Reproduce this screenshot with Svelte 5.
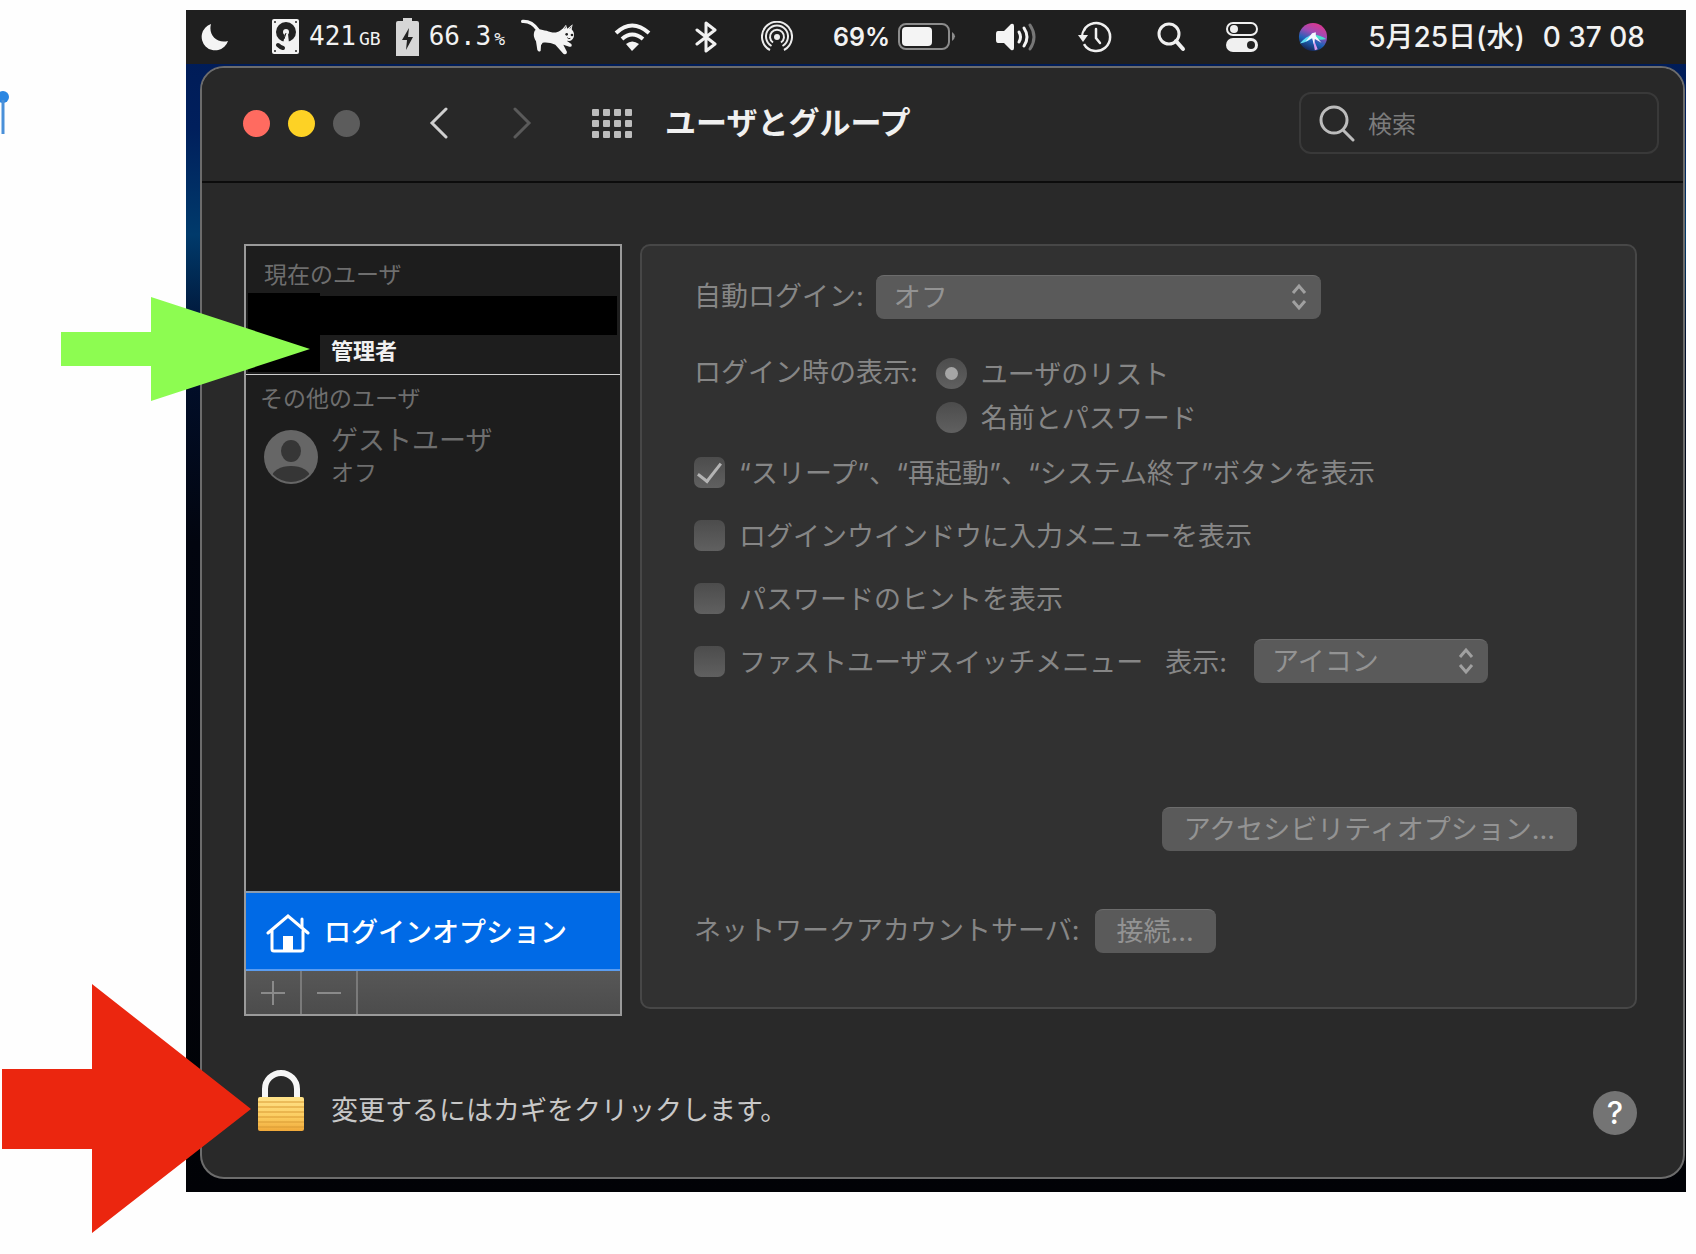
<script>
  let search = '';
  let autoLogin = 'off';
  let loginDisplay = 'list';
  let menuStyle = 'icon';

  let options = [
    { id: 'power', label: '“スリープ”、“再起動”、“システム終了”ボタンを表示', checked: true },
    { id: 'input', label: 'ログインウインドウに入力メニューを表示', checked: false },
    { id: 'hint', label: 'パスワードのヒントを表示', checked: false },
    { id: 'fast', label: 'ファストユーザスイッチメニュー', checked: false }
  ];

  const dots = [0, 1, 2, 3].flatMap((col) => [0, 1, 2].map((row) => ({ col, row })));
</script>

<div class="page">
  <div class="desktop">
    <header class="menubar">
      <svg viewBox="0 0 32 32" width="32" height="32">
        <path d="M11 3A13.500 13.500 0 1 0 28 20C17 23 8 14 11 3Z" fill="#f4f4f4" />
      </svg>

      <div class="stats">
        <div class="stat">
          <svg viewBox="0 0 28 36" width="28" height="36">
            <rect x="0" y="0" width="27" height="35" rx="2" fill="#f2f2f2" />
            <circle cx="14" cy="13" r="10" fill="#222" />
            <path d="M13 15L11 25L17 24L16 15Z" fill="#f2f2f2" />
            <circle cx="14" cy="13" r="3" fill="#f2f2f2" />
            <path d="M14 14L12 20" stroke="#222" stroke-width="1" />
            <path d="M6 26Q8 28 11 29" stroke="#222" stroke-width="4" stroke-linecap="round" fill="none" />
            <circle cx="3" cy="3" r="1" fill="#222" />
            <circle cx="24" cy="3" r="1" fill="#222" />
            <circle cx="3" cy="32" r="1" fill="#222" />
            <circle cx="24" cy="32" r="1" fill="#222" />
          </svg>
          <span class="mono">421<small>GB</small></span>
        </div>
        <div class="stat">
          <svg viewBox="0 0 24 38" width="24" height="38">
            <path d="M7 0H16V3H21Q23 3 23 5V38H0V5Q0 3 2 3H7Z" fill="#d6d6d6" />
            <path d="M13 10L6 22H11L10 32L17 19H12Z" fill="#222" />
          </svg>
          <span class="mono">66.3<small>%</small></span>
        </div>
        <svg viewBox="36 28 162 114" width="54" height="38">
          <path d="M44 38C64 37 78 46 90 64" stroke="#f4f4f4" stroke-width="10" stroke-linecap="round" fill="none" />
          <path d="M80 66C92 56 104 66 116 66C130 72 146 74 156 66L164 60L174 48L178 60L194 47L191 62C204 76 198 94 184 97L176 96L190 106Q194 116 184 114L166 108L177 130Q176 140 166 135L142 108C128 102 116 100 104 102L99 110L98 126Q93 132 88 124L84 98C76 84 76 76 80 66Z" fill="#f4f4f4" />
          <path d="M170 60L174 53M185 60L190 54" stroke="#222" stroke-width="2" />
          <circle cx="176" cy="77" r="4" fill="#222" />
          <circle cx="192" cy="79" r="4" fill="#222" />
          <path d="M178 87Q182 92 187 89" stroke="#222" stroke-width="3" fill="none" />
        </svg>
      </div>

      <svg viewBox="0 0 37 30" width="37" height="30">
        <g fill="none" stroke="#f4f4f4" stroke-width="4">
          <path d="M2 11Q18 -4 35 11" />
          <path d="M8 17Q18 8 29 17" />
        </g>
        <path d="M12 22Q18 17 25 22L18 29Z" fill="#f4f4f4" />
      </svg>

      <svg viewBox="1 0 30 32" width="30" height="32">
        <path d="M7 9L25 23L16 30V2L25 9L7 23" fill="none" stroke="#f0f0f0" stroke-width="3" stroke-linejoin="round" stroke-linecap="round" />
      </svg>

      <svg viewBox="0 0 32 32" width="32" height="32">
        <g fill="none" stroke="#ececec" stroke-width="2">
          <path d="M9 29A15 15 0 1 1 23 29" />
          <path d="M10.500 25A11 11 0 1 1 21.500 25" />
          <path d="M12 21.500A7 7 0 1 1 20 21.500" />
        </g>
        <path d="M16 17L10 31H22Z" fill="#1f1f1f" />
        <circle cx="16" cy="16" r="3" fill="#ececec" />
      </svg>

      <div class="battery">
        <span>69%</span>
        <svg viewBox="0 0 58 28" width="58" height="28">
          <rect x="1" y="1" width="50" height="25" rx="7" fill="none" stroke="#8c8c8c" stroke-width="2" />
          <rect x="4" y="4" width="30" height="19" rx="4" fill="#f4f4f4" />
          <path d="M54 9Q60 13 54 18Z" fill="#8c8c8c" />
        </svg>
      </div>

      <svg viewBox="0 0 40 30" width="40" height="30">
        <path d="M2 9H8L15 2Q18 1 18 4V26Q18 29 15 28L8 21H2Q0 21 0 18V12Q0 9 2 9Z" fill="#f4f4f4" />
        <g fill="none" stroke-width="3" stroke-linecap="round">
          <path d="M23 10Q26 15 23 20" stroke="#f4f4f4" />
          <path d="M28 6Q34 15 28 24" stroke="#f4f4f4" />
          <path d="M34 3Q42 15 34 27" stroke="#777" />
        </g>
      </svg>

      <svg viewBox="0 0 38 32" width="38" height="32">
        <path d="M8 9A14 14 0 1 1 8 23" fill="none" stroke="#f0f0f0" stroke-width="2.500" />
        <path d="M6 15V16Q6 11 9 8" fill="none" stroke="#f0f0f0" stroke-width="2" />
        <path d="M2 14H12L7 21Z" fill="#f0f0f0" />
        <path d="M20 8V17L24 22" fill="none" stroke="#f0f0f0" stroke-width="2.500" stroke-linecap="round" />
      </svg>

      <svg viewBox="0 0 32 32" width="32" height="32">
        <circle cx="15" cy="13" r="10" fill="none" stroke="#f0f0f0" stroke-width="3" />
        <path d="M22 20L29 28" stroke="#f0f0f0" stroke-width="4" stroke-linecap="round" />
      </svg>

      <svg viewBox="0 0 32 32" width="32" height="32">
        <rect x="1" y="2" width="30" height="12" rx="6" fill="none" stroke="#f0f0f0" stroke-width="2" />
        <circle cx="8" cy="8" r="4" fill="#f0f0f0" />
        <rect x="0" y="17" width="32" height="14" rx="7" fill="#f0f0f0" />
        <circle cx="25" cy="24" r="4" fill="#222" />
      </svg>

      <svg viewBox="0 0 32 32" width="30" height="30">
        <defs>
          <linearGradient id="siri" x1="0.700" y1="0" x2="0.300" y2="1">
            <stop offset="0" stop-color="#e0358c" />
            <stop offset="0.350" stop-color="#a04bb4" />
            <stop offset="0.650" stop-color="#1d62b8" />
            <stop offset="1" stop-color="#15204a" />
          </linearGradient>
        </defs>
        <circle cx="16" cy="16" r="15" fill="url(#siri)" />
        <path d="M17 13Q8 15 2 23Q11 21 17 16Z" fill="#5fdcf4" />
        <path d="M16 13Q24 14 30 18Q23 20 16 17Z" fill="#49e0cf" />
        <path d="M15 14L18 30L21 29Z" fill="#d79af0" />
        <path d="M15 12L19 11L19 15L25 22L18 18L17 24L15 17L8 21Z" fill="#f6f8ff" />
      </svg>

      <time class="clock" datetime="2022-05-25T00:37:08">
        <span>5月25日(水)</span>
        <span>0 37 08</span>
      </time>
    </header>

    <main class="window">
      <div class="titlebar">
        <div class="lights">
          <button class="light close" aria-label="閉じる"></button>
          <button class="light minimize" aria-label="しまう"></button>
          <button class="light zoom" aria-label="拡大" disabled></button>
        </div>
        <div class="nav">
          <button class="icon-btn" aria-label="戻る">
            <svg viewBox="0 0 20 32" width="20" height="32">
              <path d="M17 2L3 16L17 30" fill="none" stroke="#cfcfcf" stroke-width="3" stroke-linecap="round" />
            </svg>
          </button>
          <button class="icon-btn" aria-label="進む" disabled>
            <svg viewBox="0 0 20 32" width="20" height="32">
              <path d="M3 2L17 16L3 30" fill="none" stroke="#5a5a5a" stroke-width="3" stroke-linecap="round" />
            </svg>
          </button>
        </div>
        <button class="icon-btn" aria-label="すべてを表示">
          <svg viewBox="0 0 40 29" width="40" height="29">
            {#each dots as dot}
              <rect x={dot.col * 11} y={dot.row * 11} width="7" height="7" rx="1" fill="#bdbdbd" />
            {/each}
          </svg>
        </button>
        <h1>ユーザとグループ</h1>
        <label class="search">
          <svg viewBox="0 0 36 38" width="36" height="38">
            <circle cx="15" cy="16" r="13" fill="none" stroke="#bcbcbc" stroke-width="3" />
            <path d="M24 26L34 36" stroke="#bcbcbc" stroke-width="3" stroke-linecap="round" />
          </svg>
          <input type="search" placeholder="検索" aria-label="検索" bind:value={search} />
        </label>
      </div>

      <div class="content">
        <aside class="users">
          <section class="current">
            <h2>現在のユーザ</h2>
            <div class="user-row">
              <div class="masked-avatar"></div>
              <div class="masked-info">
                <div class="masked-name"></div>
                <p>管理者</p>
              </div>
            </div>
          </section>

          <section class="others">
            <h2>その他のユーザ</h2>
            <div class="guest">
              <svg viewBox="0 0 54 54" width="54" height="54">
                <defs>
                  <clipPath id="avatar"><circle cx="27" cy="27" r="25" /></clipPath>
                </defs>
                <circle cx="27" cy="27" r="27" fill="#666" />
                <ellipse cx="27" cy="21" rx="10" ry="11" fill="#363636" />
                <ellipse cx="27" cy="47" rx="19" ry="11" fill="#363636" clip-path="url(#avatar)" />
              </svg>
              <div>
                <p class="guest-name">ゲストユーザ</p>
                <p class="guest-state">オフ</p>
              </div>
            </div>
          </section>

          <button class="login-options">
            <svg viewBox="0 0 44 40" width="44" height="40">
              <path d="M2 20L22 3L42 20" fill="none" stroke="#fff" stroke-width="3" stroke-linecap="round" />
              <path d="M6 18V36Q6 38 8 38H35Q37 38 37 36V18M36 14V6" fill="none" stroke="#fff" stroke-width="3" stroke-linecap="round" />
              <rect x="17" y="23" width="10" height="15" fill="#fff" />
            </svg>
            ログインオプション
          </button>

          <div class="list-tools">
            <button aria-label="追加" disabled>
              <svg viewBox="0 0 24 24" width="24" height="24">
                <path d="M12 0V24M0 12H24" stroke="#8a8a8a" stroke-width="2" />
              </svg>
            </button>
            <button aria-label="削除" disabled>
              <svg viewBox="0 0 24 24" width="24" height="24">
                <path d="M0 12H24" stroke="#8a8a8a" stroke-width="2" />
              </svg>
            </button>
          </div>
        </aside>

        <section class="panel">
          <div class="row">
            <label for="auto-login">自動ログイン:</label>
            <div class="select wide">
              <select id="auto-login" bind:value={autoLogin} disabled>
                <option value="off">オフ</option>
              </select>
              <svg viewBox="0 0 18 28" width="18" height="28">
                <path d="M3 10L9 3L15 10M3 18L9 25L15 18" fill="none" stroke="#a0a0a0" stroke-width="3" />
              </svg>
            </div>
          </div>

          <div class="radios" role="radiogroup" aria-labelledby="display-label">
            <span id="display-label">ログイン時の表示:</span>
            <div>
              <label class="row">
                <input type="radio" name="display" value="list" bind:group={loginDisplay} disabled />
                <span class="caption">ユーザのリスト</span>
              </label>
              <label class="row">
                <input type="radio" name="display" value="name" bind:group={loginDisplay} disabled />
                <span class="caption">名前とパスワード</span>
              </label>
            </div>
          </div>

          <div class="checks">
            {#each options as option}
              <div class="row">
                <label class="check">
                  <input type="checkbox" bind:checked={option.checked} disabled />
                  <span class="caption">{option.label}</span>
                </label>
                {#if option.id === 'fast'}
                  <label class="menu-label caption" for="menu-style">表示:</label>
                  <div class="select">
                    <select id="menu-style" bind:value={menuStyle} disabled>
                      <option value="icon">アイコン</option>
                    </select>
                    <svg viewBox="0 0 18 28" width="18" height="28">
                      <path d="M3 10L9 3L15 10M3 18L9 25L15 18" fill="none" stroke="#a0a0a0" stroke-width="3" />
                    </svg>
                  </div>
                {/if}
              </div>
            {/each}
          </div>

          <div class="row accessibility">
            <button class="push" disabled>アクセシビリティオプション...</button>
          </div>

          <div class="row network">
            <span>ネットワークアカウントサーバ:</span>
            <button class="push" disabled>接続...</button>
          </div>
        </section>
      </div>

      <footer>
        <button class="icon-btn lock" aria-label="カギ">
          <svg viewBox="0 0 48 62" width="48" height="62">
            <defs>
              <linearGradient id="brass" x1="0" y1="0" x2="0" y2="1">
                <stop offset="0" stop-color="#ffe38a" />
                <stop offset="0.600" stop-color="#fbcb5e" />
                <stop offset="1" stop-color="#f0a93a" />
              </linearGradient>
            </defs>
            <path d="M8 30V19A16 16 0 0 1 40 19V30" fill="none" stroke="#f6f6f6" stroke-width="6" />
            <rect x="1" y="27" width="46" height="34" rx="2" fill="url(#brass)" />
            <path d="M1 32H47M1 37H47M1 42H47M1 47H47M1 52H47M1 57H47" stroke="#d99a35" stroke-width="1" />
          </svg>
        </button>
        <p>変更するにはカギをクリックします。</p>
        <button class="help" aria-label="ヘルプ">?</button>
      </footer>
    </main>
  </div>

  <svg class="notes" viewBox="0 0 320 1254" width="320" height="1254" aria-hidden="true">
    <circle cx="3" cy="97" r="6" fill="#2a86e2" />
    <path d="M3 100V134" stroke="#4a90d9" stroke-width="3" />
    <path d="M61 332H151V297L310 349L151 401V366H61Z" fill="#8dfc51" />
    <path d="M2 1069H92V984L251 1109L92 1233V1149H2Z" fill="#eb260f" />
  </svg>
</div>

<style>
  :global(body) {
    margin: 0;
    background: #fefefe;
  }

  .page {
    position: relative;
    padding: 10px 10px 62px 186px;
    font-family: Inter, "Noto Sans CJK JP", sans-serif;
    font-size: 27px;
    line-height: 32px;
    color: #868686;
  }

  .page * { box-sizing: border-box; }

  h1, h2, p { margin: 0; }

  button, input, select {
    font: inherit;
    color: inherit;
    margin: 0;
  }

  svg {
    display: block;
    flex: none;
  }

  .desktop {
    padding-bottom: 13px;
    background: linear-gradient(180deg, #001a55 0, #001f5c 10%, #003a6b 19%, #01102f 28%, #02050f 45%, #010206 100%);
  }

  .menubar {
    display: flex;
    align-items: center;
    justify-content: flex-end;
    gap: 40px;
    height: 54px;
    padding-right: 41px;
    background: #1f1f1f;
    color: #f2f2f2;
    white-space: nowrap;
  }

  .stats {
    display: flex;
    align-items: center;
    gap: 15px;
  }

  .stat {
    display: flex;
    align-items: center;
    gap: 9px;
  }

  .mono {
    font-family: "DejaVu Sans Mono", monospace;
    font-size: 26px;
  }

  .mono small {
    margin-left: 3px;
    font-size: 18px;
  }

  .battery {
    display: flex;
    align-items: center;
    gap: 8px;
    font-size: 25px;
    font-weight: 600;
  }

  .clock {
    display: flex;
    gap: 18px;
    font-size: 28px;
    font-weight: 500;
  }

  .window {
    margin: 2px 1px 0 14px;
    border: 2px solid #6c6c6c;
    border-radius: 24px;
    background: #292929;
    overflow: hidden;
  }

  .titlebar {
    display: flex;
    align-items: center;
    height: 115px;
    padding: 0 24px 3px 41px;
    border-bottom: 2px solid #0c0c0c;
    background: #282828;
  }

  .lights {
    display: flex;
    gap: 18px;
  }

  .light {
    width: 27px;
    height: 27px;
    padding: 0;
    border: 0;
    border-radius: 50%;
  }

  .close { background: #ff6b60; }
  .minimize { background: #fdd225; }
  .zoom { background: #5c5c5c; }

  .nav {
    display: flex;
    gap: 63px;
    margin: 0 60px 0 69px;
  }

  .icon-btn {
    padding: 0;
    border: 0;
    background: none;
  }

  h1 {
    margin-left: 33px;
    font-size: 31px;
    font-weight: 700;
    color: #f0f0f0;
    white-space: nowrap;
  }

  .search {
    display: flex;
    align-items: center;
    gap: 13px;
    width: 360px;
    height: 62px;
    margin-left: auto;
    padding: 0 18px;
    border: 2px solid #393939;
    border-radius: 12px;
  }

  .search input {
    flex: 1;
    min-width: 0;
    padding: 4px 0 0;
    border: 0;
    outline: 0;
    background: none;
    font-size: 24px;
  }

  .search input::placeholder { color: #7c7c7c; opacity: 1; }

  .content {
    display: grid;
    grid-template-columns: 378px 1fr;
    gap: 18px;
    padding: 61px 46px 0 42px;
  }

  .users {
    display: flex;
    flex-direction: column;
    border: 2px solid #9a9a9a;
    background: #1d1d1d;
  }

  h2 {
    font-size: 23px;
    font-weight: 400;
    line-height: 30px;
    color: #6e6e6e;
  }

  .current {
    padding-top: 14px;
    border-bottom: 1px solid #d0d0d0;
  }

  .current h2 { padding-left: 18px; }

  .user-row {
    display: flex;
    padding: 3px 3px 2px 2px;
  }

  .masked-avatar {
    width: 72px;
    height: 79px;
    background: #000;
  }

  .masked-info {
    flex: 1;
    padding-top: 3px;
  }

  .masked-name {
    height: 39px;
    background: #000;
  }

  .masked-info p {
    padding-left: 11px;
    font-size: 22px;
    font-weight: 700;
    color: #f0f0f0;
  }

  .others {
    flex: 1;
    padding: 9px 0 0 14px;
  }

  .guest {
    display: flex;
    align-items: center;
    gap: 13px;
    padding: 11px 0 0 4px;
    color: #6e6e6e;
  }

  .guest-state { font-size: 23px; }

  .login-options {
    display: flex;
    align-items: center;
    gap: 14px;
    height: 80px;
    padding: 4px 20px 0;
    border: 0;
    border-top: 2px solid #8a9cb0;
    border-bottom: 2px solid #5a9cf0;
    background: #006ae6;
    color: #fff;
    font-weight: 500;
  }

  .list-tools {
    display: flex;
    height: 43px;
    background: linear-gradient(#575757, #4c4c4c);
  }

  .list-tools button {
    display: flex;
    align-items: center;
    justify-content: center;
    width: 56px;
    padding: 0;
    border: 0;
    border-right: 2px solid #7a7a7a;
    background: none;
  }

  .panel {
    margin-bottom: 7px;
    padding: 29px 58px 54px 52px;
    border: 2px solid #474747;
    border-radius: 10px;
    background: #313131;
    white-space: nowrap;
  }

  .row {
    display: flex;
    align-items: center;
    height: 44px;
  }

  .caption { padding-top: 3px; }

  .select {
    position: relative;
    width: 234px;
    margin-left: 27px;
  }

  .select.wide {
    width: 445px;
    margin-left: 12px;
  }

  .select select {
    display: block;
    width: 100%;
    height: 44px;
    padding: 0 18px;
    border: 0;
    border-top: 1px solid #6c6c6c;
    border-radius: 8px;
    background: #5a5a5a;
    color: #939393;
    appearance: none;
    opacity: 1;
  }

  .select svg {
    position: absolute;
    top: 8px;
    right: 13px;
    pointer-events: none;
  }

  .radios {
    display: flex;
    gap: 18px;
    padding-top: 32px;
  }

  .radios > span { line-height: 44px; }

  .radios label { gap: 14px; }

  input[type='radio'],
  input[type='checkbox'] {
    display: grid;
    place-items: center;
    flex: none;
    width: 31px;
    height: 31px;
    appearance: none;
    background: linear-gradient(#4c4c4c, #606060);
  }

  input[type='radio'] { border-radius: 50%; }
  input[type='checkbox'] { border-radius: 7px; }

  input[type='radio']:checked::before {
    content: '';
    width: 13px;
    height: 13px;
    border-radius: 50%;
    background: #a6a6a6;
  }

  input[type='checkbox']:checked::before {
    content: '';
    width: 10px;
    height: 21px;
    margin-bottom: 5px;
    border: solid #b4b4b4;
    border-width: 0 3px 3px 0;
    transform: rotate(38deg);
  }

  .checks {
    display: flex;
    flex-direction: column;
    gap: 19px;
    padding-top: 11px;
  }

  .check {
    display: flex;
    align-items: center;
    gap: 14px;
  }

  .menu-label { margin-left: 22px; }

  .push {
    height: 44px;
    padding: 0 22px;
    border: 0;
    border-top: 1px solid #6c6c6c;
    border-radius: 8px;
    background: #5a5a5a;
    color: #939393;
  }

  .accessibility {
    justify-content: flex-end;
    margin-top: 124px;
  }

  .network {
    gap: 15px;
    margin-top: 58px;
  }

  footer {
    display: flex;
    align-items: flex-end;
    gap: 26px;
    padding: 54px 46px 42px 55px;
    color: #c8c8c8;
  }

  .lock { margin-bottom: 3px; }

  footer p {
    padding-bottom: 2px;
    line-height: 44px;
  }

  .help {
    width: 44px;
    height: 44px;
    margin-left: auto;
    padding: 0;
    border: 0;
    border-radius: 50%;
    background: #747474;
    color: #fff;
    font-size: 31px;
    font-weight: 500;
  }

  .notes {
    position: absolute;
    top: 0;
    left: 0;
    pointer-events: none;
  }
</style>
